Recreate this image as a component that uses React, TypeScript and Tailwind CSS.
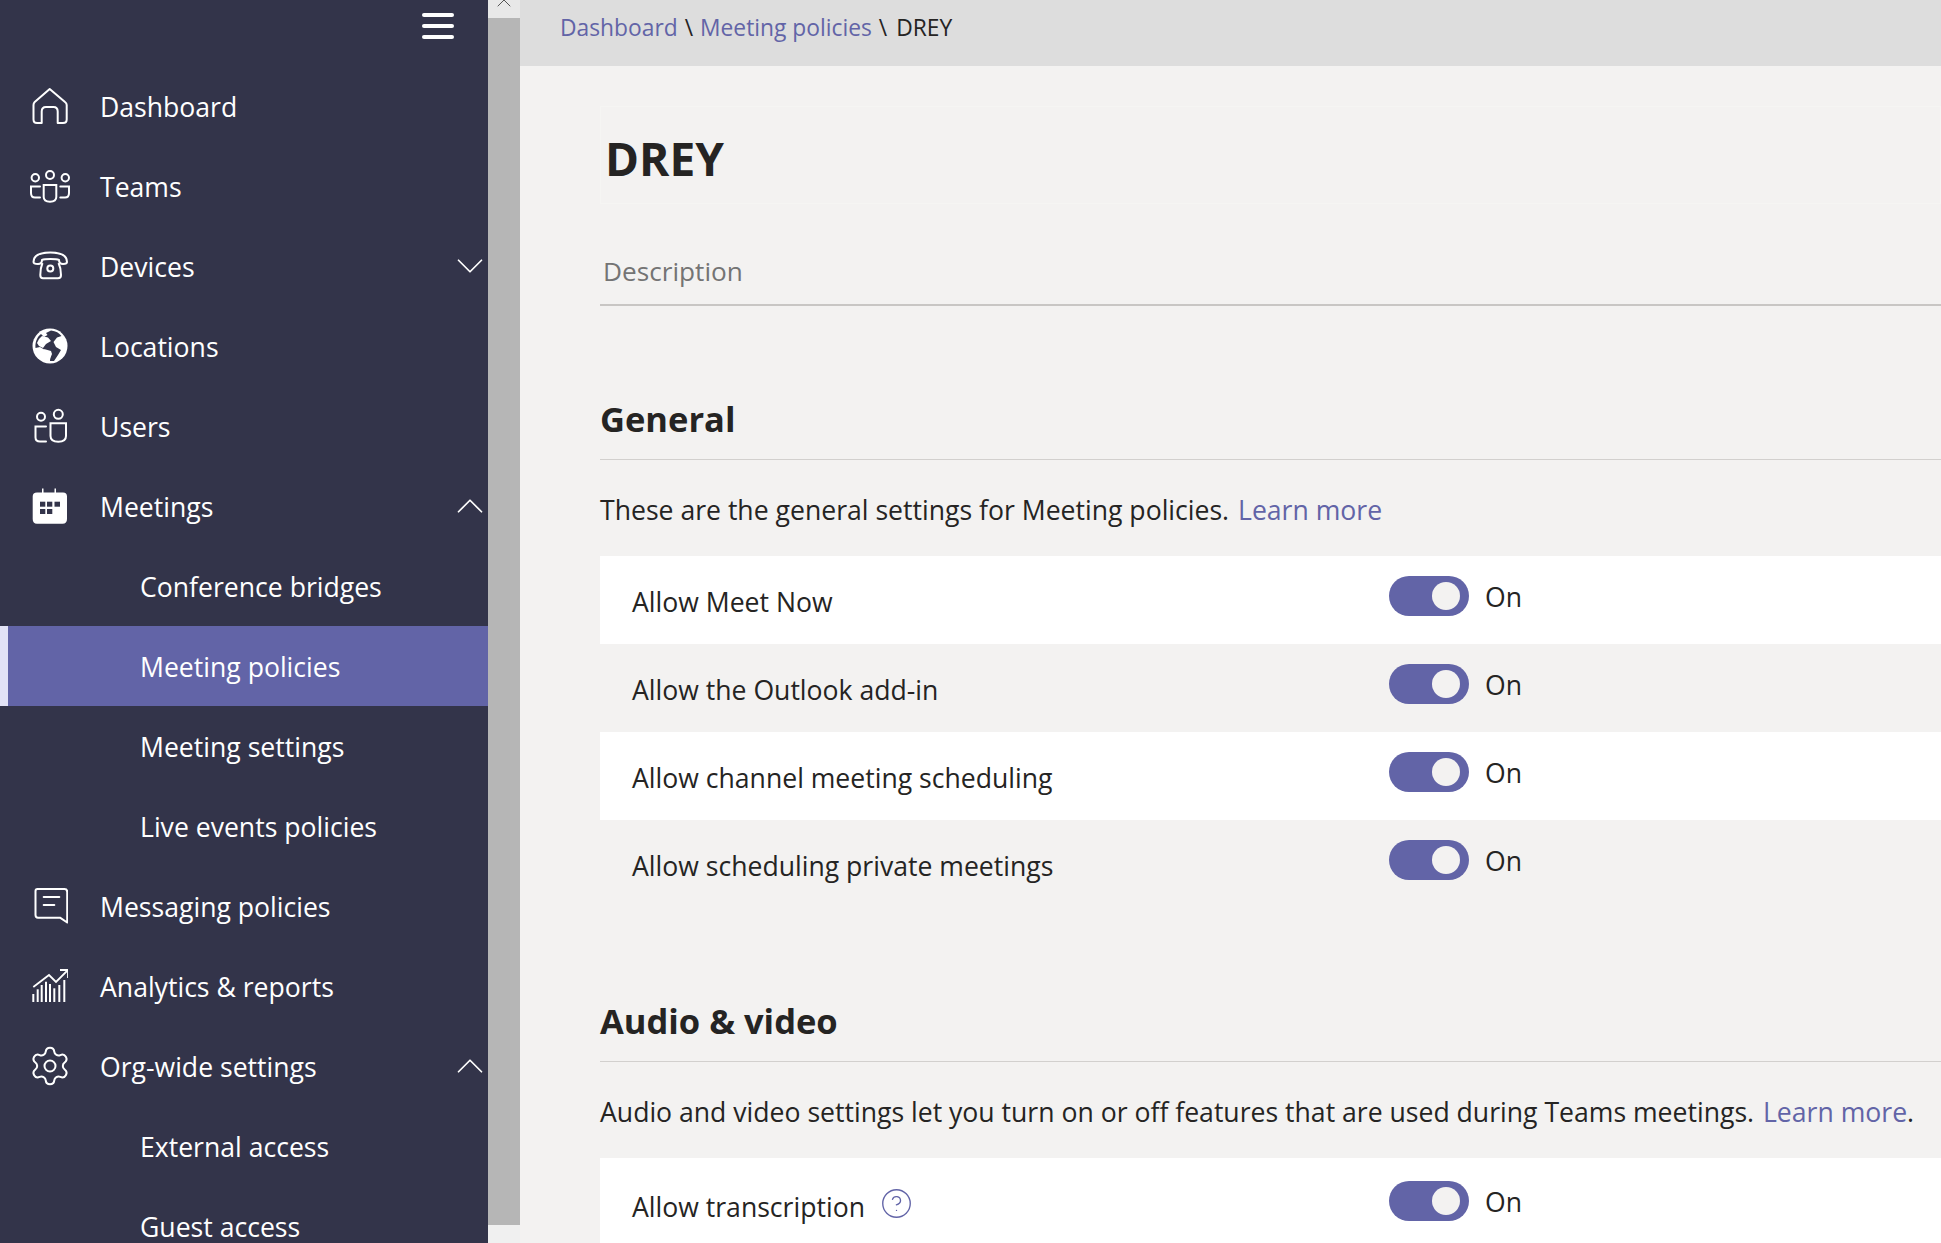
import { ChevronDown, ChevronUp, CircleHelp, Settings } from 'lucide-react';
import type { ReactNode } from 'react';

function HomeIcon() {
  return (
    <svg viewBox="0 0 36 36" className="h-9 w-9 overflow-visible" fill="none" stroke="white" strokeWidth="2" strokeLinejoin="round">
      <path d="M17.7 1 L2.7 14 Q1.5 15.2 1.5 17 V31.5 Q1.5 35 5 35 H9.7 V23.5 Q9.7 19 14 19 H21.5 Q25.7 19 25.7 23.5 V35 H31 Q34.7 35 34.7 31.5 V17 Q34.7 15.2 33 14 Z" />
    </svg>
  );
}

function TeamsIcon() {
  return (
    <svg viewBox="0 0 36 36" className="h-9 w-9 overflow-visible" fill="none" stroke="white" strokeWidth="2" strokeLinecap="round">
      <circle cx="18" cy="7" r="4" />
      <circle cx="3.3" cy="9.7" r="3.7" />
      <circle cx="33.3" cy="9.7" r="3.7" />
      <path d="M11.7 17 H24.3 V29 Q24.3 33.7 18 33.7 Q11.7 33.7 11.7 29 Z" />
      <path d="M8 18.5 H-1 V25 Q-1 29.5 3 29.5 H8" />
      <path d="M28.3 18.5 H37 V25 Q37 29.5 33 29.5 H28.3" />
    </svg>
  );
}

function PhoneIcon() {
  return (
    <svg viewBox="0 0 36 36" className="h-9 w-9" fill="none" stroke="white" strokeWidth="2" strokeLinejoin="round">
      <path d="M1.5 14 C1.5 7 9 4.5 18.3 4.5 C28 4.5 35 7 35 14 C35 16 33 16 31 16 C28 16 27 14.5 27 12 C24 10.8 13 10.8 10 12 C10 14.5 9 16 6 16 C3.5 16 1.5 16 1.5 14 Z" />
      <path d="M10.5 15 Q8.3 20 8.3 27 Q8.3 30.3 11 30.3 H26 Q29 30.3 29 27 Q29 20 26.5 15" />
      <circle cx="18.3" cy="20.5" r="3" />
    </svg>
  );
}

function GlobeIcon() {
  return (
    <svg viewBox="0 0 36 36" className="h-9 w-9">
      <circle cx="18" cy="18" r="17.5" fill="white" />
      <path d="M19 2.5 C24 3 27 5 29.5 8 L25 9.5 L21.5 14 L24 19 L29 22 L26 27 L22 33 L18 33 L18.5 25 L13 22 L8 19 L3.5 20 C3 14 5 9 9 6 L12 9 L15.5 7 L14 5 Z" fill="#33344a" />
      <path d="M10 8 L16 9.5 L19 13 L14 16 L11 20 L7 18 L5 15 Q7 10 10 8 Z" fill="white" />
      <path d="M12 21 L19 23 L20 26 L18 31 L16.5 34 Q13 33.5 12 32 L14 27 Z" fill="white" />
    </svg>
  );
}

function UsersIcon() {
  return (
    <svg viewBox="0 0 36 36" className="h-9 w-9" fill="none" stroke="white" strokeWidth="2" strokeLinecap="round">
      <circle cx="9" cy="8.7" r="4" />
      <circle cx="26.3" cy="6.3" r="4.5" />
      <path d="M18.5 15.3 H34 V28 Q34 33.7 26.3 33.7 Q18.5 33.7 18.5 28 Z" />
      <path d="M14 18.5 H3.5 V29.5 Q3.5 33.5 8 33.5 H14" />
    </svg>
  );
}

function CalendarIcon() {
  return (
    <svg viewBox="0 0 36 36" className="h-9 w-9">
      <path d="M10 4.5 V0.5 H11.5 V4.5 H22.5 V0.5 H24 V4.5 H31 Q35 4.5 35 8.5 V31 Q35 35.7 30.5 35.7 H5 Q0.7 35.7 0.7 31 V8.5 Q0.7 4.5 5 4.5 Z" fill="white" />
      <rect x="8" y="13.7" width="5.3" height="5" fill="#33344a" />
      <rect x="15" y="13.7" width="5.3" height="5" fill="#33344a" />
      <rect x="22.5" y="13.7" width="5.5" height="5" fill="#33344a" />
      <rect x="8" y="21" width="5.3" height="5" fill="#33344a" />
      <rect x="15" y="21" width="5.3" height="5" fill="#33344a" />
    </svg>
  );
}

function MessageIcon() {
  return (
    <svg viewBox="0 0 36 36" className="h-9 w-9" fill="none" stroke="white" strokeWidth="2" strokeLinejoin="round" strokeLinecap="round">
      <path d="M5.5 1 H32.5 Q35.2 1 35.2 4 V34.5 L28 29.7 H6 Q3.5 29.7 3.5 27 V3 Q3.5 1 5.5 1 Z" />
      <path d="M11.7 9 H27.3" />
      <path d="M11.7 17 H22.3" />
    </svg>
  );
}

function ChartIcon() {
  const bars = [
    [1.3, 26],
    [5.7, 21.3],
    [9.7, 17],
    [14, 13.7],
    [18, 16],
    [22.3, 20.3],
    [27.3, 17],
    [32.3, 12],
  ];
  return (
    <svg viewBox="0 0 36 36" className="h-9 w-9" fill="none" stroke="white" strokeWidth="2">
      {bars.map(([x, top]) => (
        <path key={x} d={`M${x} ${top} V34`} />
      ))}
      <path d="M1.3 19 L17 7 L24 14 L35.5 2.5" strokeWidth="1.8" />
      <path d="M28 2 H36 V10" strokeWidth="1.8" />
    </svg>
  );
}

type NavRowProps = {
  label: string;
  icon?: ReactNode;
  chevron?: 'up' | 'down';
  active?: boolean;
};

function NavRow({ label, icon, chevron, active }: NavRowProps) {
  if (!icon) {
    return (
      <div className={`flex h-20 shrink-0 items-center pt-1 ${active ? 'border-l-8 border-[#e2e2f6] bg-[#6264a7] pl-[132px]' : 'pl-[140px]'}`}>
        <span>{label}</span>
      </div>
    );
  }
  return (
    <div className="flex h-20 shrink-0 items-center pl-8">
      <span className="mr-8 flex h-9 w-9 shrink-0 items-center justify-center">{icon}</span>
      <span className="flex-1 pt-1">{label}</span>
      {chevron === 'down' && <ChevronDown size={46} strokeWidth={0.9} className="-mr-[5px] shrink-0" />}
      {chevron === 'up' && <ChevronUp size={46} strokeWidth={0.9} className="-mr-[5px] shrink-0" />}
    </div>
  );
}

function Sidebar() {
  return (
    <aside className="flex h-full w-[488px] shrink-0 flex-col overflow-hidden bg-[#33344a] text-[26.6px] text-white">
      <div className="flex h-[66px] shrink-0 justify-end pr-[34px] pt-[13px]">
        <div className="flex h-[26px] w-8 flex-col justify-between">
          <span className="h-1 rounded-full bg-white" />
          <span className="h-1 rounded-full bg-white" />
          <span className="h-1 rounded-full bg-white" />
        </div>
      </div>
      <NavRow label="Dashboard" icon={<HomeIcon />} />
      <NavRow label="Teams" icon={<TeamsIcon />} />
      <NavRow label="Devices" icon={<PhoneIcon />} chevron="down" />
      <NavRow label="Locations" icon={<GlobeIcon />} />
      <NavRow label="Users" icon={<UsersIcon />} />
      <NavRow label="Meetings" icon={<CalendarIcon />} chevron="up" />
      <NavRow label="Conference bridges" />
      <NavRow label="Meeting policies" active />
      <NavRow label="Meeting settings" />
      <NavRow label="Live events policies" />
      <NavRow label="Messaging policies" icon={<MessageIcon />} />
      <NavRow label="Analytics & reports" icon={<ChartIcon />} />
      <NavRow label="Org-wide settings" icon={<Settings size={44} strokeWidth={1.1} className="shrink-0" />} chevron="up" />
      <NavRow label="External access" />
      <NavRow label="Guest access" />
    </aside>
  );
}

function Scrollbar() {
  return (
    <div className="flex h-full w-8 shrink-0 flex-col bg-[#f0f0f0]">
      <div className="flex h-[18px] shrink-0 justify-center overflow-hidden bg-[#e8e8e8]">
        <ChevronUp size={24} strokeWidth={1} className="-mt-[9px] text-[#555555]" />
      </div>
      <div className="h-[1207px] shrink-0 bg-[#b6b6b6]" />
    </div>
  );
}

function Toggle() {
  return (
    <div className="flex items-center">
      <div className="flex h-10 w-20 items-center justify-end rounded-full bg-[#6264a7] pr-[9px]">
        <div className="h-7 w-7 rounded-full bg-[#f3f2f1]" />
      </div>
      <span className="ml-4 mt-[2px] text-[26.6px] leading-none">On</span>
    </div>
  );
}

function SettingRow({ label, white, help }: { label: string; white?: boolean; help?: boolean }) {
  return (
    <div className={`flex h-[88px] shrink-0 ${white ? 'bg-white' : ''}`}>
      <div className={`flex h-full w-[789px] shrink-0 items-center pl-8 text-[26.6px] ${help ? 'pt-[11px]' : 'pt-[5px]'}`}>
        <span>{label}</span>
        {help && <CircleHelp size={33} strokeWidth={1} className="-mt-[8px] ml-[15px] shrink-0 text-[#6264a7]" />}
      </div>
      <div className={help ? 'pt-[23px]' : 'pt-5'}>
        <Toggle />
      </div>
    </div>
  );
}

function SectionHeader({ title, children }: { title: string; children: ReactNode }) {
  return (
    <>
      <div className="flex h-[154px] shrink-0 items-end border-b border-[#d2d0ce] pb-[18px]">
        <h2 className="text-[34.5px] font-bold leading-[44px]">{title}</h2>
      </div>
      <div className="flex h-[96px] shrink-0 items-center pt-[5px] text-[26.6px]">
        <p>{children}</p>
      </div>
    </>
  );
}

export default function App() {
  return (
    <div className="flex h-[1243px] w-[1941px] overflow-hidden bg-[#f3f2f1] font-['Open_Sans',sans-serif] text-[#252423]">
      <Sidebar />
      <Scrollbar />
      <main className="flex h-full min-w-0 flex-1 flex-col">
        <div className="flex h-[66px] shrink-0 items-center gap-[7px] bg-[#dddddd] pb-[9px] pl-10 text-[22.8px]">
          <a className="text-[#6264a7]">Dashboard</a>
          <span>\</span>
          <a className="text-[#6264a7]">Meeting policies</a>
          <span>\</span>
          <span className="ml-[2px]">DREY</span>
        </div>
        <div className="flex flex-col pl-20">
          <div className="mt-10 flex h-[98px] shrink-0 items-center border border-[#f5f5f3] pl-1 pt-[6px]">
            <h1 className="text-[46px] font-bold">DREY</h1>
          </div>
          <div className="flex h-[102px] shrink-0 items-end border-b-2 border-[#c8c6c4] pb-[13px] pl-[3px] text-[26.2px] text-[#747474]">
            Description
          </div>
          <SectionHeader title="General">
            These are the general settings for Meeting policies. <a className="ml-[2px] text-[#6264a7]">Learn more</a>
          </SectionHeader>
          <SettingRow label="Allow Meet Now" white />
          <SettingRow label="Allow the Outlook add-in" />
          <SettingRow label="Allow channel meeting scheduling" white />
          <SettingRow label="Allow scheduling private meetings" />
          <SectionHeader title="Audio & video">
            Audio and video settings let you turn on or off features that are used during Teams meetings.{' '}
            <a className="ml-[2px] text-[#6264a7]">Learn more</a>.
          </SectionHeader>
          <SettingRow label="Allow transcription" white help />
        </div>
      </main>
    </div>
  );
}
